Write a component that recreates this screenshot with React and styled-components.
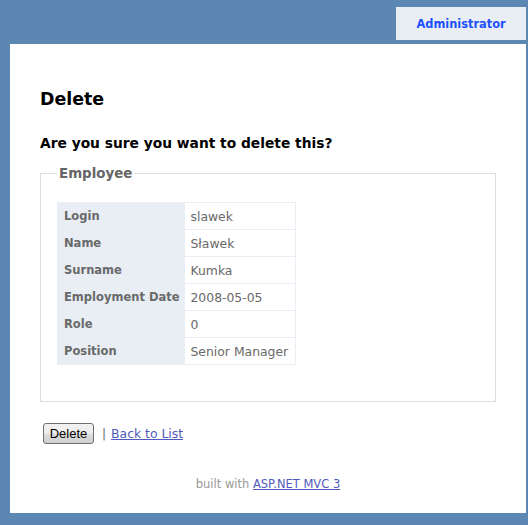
import styled, { createGlobalStyle } from 'styled-components'

const GlobalStyle = createGlobalStyle`
    html, body {
        margin: 0;
        padding: 0;
        background: #5c87b2;
        font-family: "DejaVu Sans", Verdana, sans-serif;
        font-size: 12px;
        color: #696969;
    }
`

const rows = [
    ['Login', 'slawek'],
    ['Name', 'Sławek'],
    ['Surname', 'Kumka'],
    ['Employment Date', '2008-05-05'],
    ['Role', '0'],
    ['Position', 'Senior Manager'],
]

export default function App() {
    return (
        <>
            <GlobalStyle />
            <Page>
                <Header>
                    <Tab>Administrator</Tab>
                </Header>
                <Main>
                    <Title>Delete</Title>
                    <Question>Are you sure you want to delete this?</Question>
                    <Fieldset>
                        <Legend>Employee</Legend>
                        <Table>
                            <tbody>
                                {rows.map(([label, value]) => (
                                    <tr key={label}>
                                        <Th>{label}</Th>
                                        <Td>{value}</Td>
                                    </tr>
                                ))}
                            </tbody>
                        </Table>
                    </Fieldset>
                    <Actions>
                        <Button type="button">Delete</Button>
                        <Sep>|</Sep>
                        <Link href="#">Back to List</Link>
                    </Actions>
                    <Footer>
                        built with <Link href="#">ASP.NET MVC 3</Link>
                    </Footer>
                </Main>
            </Page>
        </>
    )
}

const Page = styled.div`
    padding: 0 2px 12px 10px;
`

const Header = styled.div`
    height: 44px;
    display: flex;
    justify-content: flex-end;
    align-items: flex-start;
`

const Tab = styled.div`
    margin-top: 7px;
    width: 130px;
    height: 33px;
    padding-top: 1px;
    box-sizing: border-box;
    background: #e8eef4;
    color: #1e50ff;
    font-weight: bold;
    font-size: 11.4px;
    display: flex;
    align-items: center;
    justify-content: center;
`

const Main = styled.div`
    background: #fff;
    height: 469px;
    box-sizing: border-box;
    padding: 44px 30px 0 30px;
`

const Title = styled.h2`
    margin: 0;
    font-size: 17.4px;
    line-height: 22px;
    color: #000;
`

const Question = styled.h3`
    margin: 24px 0 0 0;
    font-size: 13.8px;
    line-height: 18px;
    color: #000;
`

const Fieldset = styled.fieldset`
    margin: 14px 0 0 0;
    padding: 0 16px 36px 16px;
    border: 1px solid #ddd;
`

const Legend = styled.legend`
    padding: 0 2px;
    font-size: 13.4px;
    font-weight: bold;
    color: #666;
`

const Table = styled.table`
    margin-top: 21px;
    border-collapse: collapse;
`

const Th = styled.th`
    background: #e8eef4;
    text-align: left;
    font-weight: bold;
    font-size: 11.5px;
    color: #696969;
    padding: 0 5px 0 6px;
    height: 27px;
    box-sizing: border-box;
    border: 1px solid #e8eef4;
    white-space: nowrap;
`

const Td = styled.td`
    padding: 0 7px 0 5px;
    height: 27px;
    box-sizing: border-box;
    border: 1px solid #e8eef4;
    font-size: 12.4px;
    color: #696969;
    white-space: nowrap;
`

const Actions = styled.div`
    margin-top: 21px;
    display: flex;
    align-items: center;
    gap: 5px;
    padding-left: 3px;
`

const Button = styled.button`
    height: 21px;
    width: 51px;
    padding: 0;
    font-family: "Liberation Sans", Arial, sans-serif;
    font-size: 13px;
    color: #000;
    border: 1px solid #707070;
    border-radius: 3px;
    background: linear-gradient(#f2f2f2, #ebebeb 50%, #dddddd 51%, #cfcfcf);
`

const Sep = styled.span`
    margin-left: 3px;
    color: #696969;
`

const Link = styled.a`
    color: #505abc;
    text-decoration: underline;
    font-size: 12.4px;
`

const Footer = styled.div`
    margin-top: 33px;
    text-align: center;
    font-size: 11.5px;
    color: #999;

    a {
        font-size: 11.5px;
    }
`
